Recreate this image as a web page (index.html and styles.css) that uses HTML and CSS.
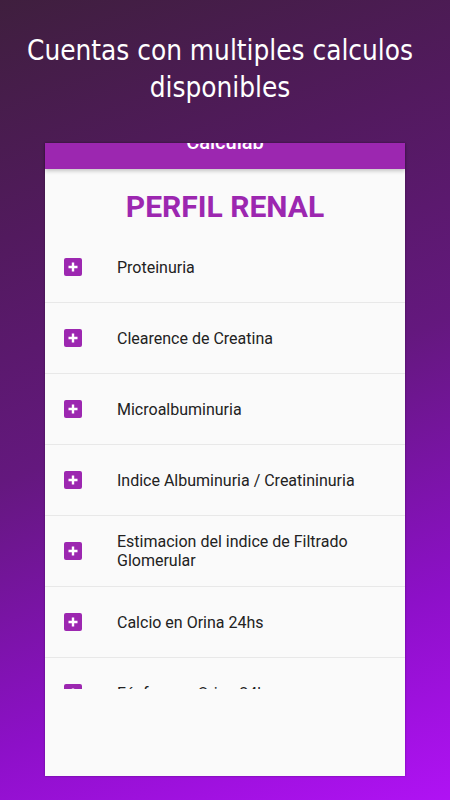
FILE: index.html
```html
<!DOCTYPE html>
<html lang="es">
<head>
<meta charset="utf-8">
<title>Calculab</title>
<link rel="stylesheet" href="styles.css">
</head>
<body>
<div class="screen">
  <h1 class="headline">Cuentas con multiples calculos disponibles</h1>
  <div class="card">
    <div class="appbar"><span class="appbar-title">Calculab</span></div>
    <div class="content">
      <h2 class="section-title">PERFIL RENAL</h2>
      <ul class="list">
        <li class="row"><span class="icon"><svg viewBox="0 0 18 18" width="18" height="18"><rect width="18" height="18" rx="2" fill="#9c27b0"/><path d="M9 4.5v9M4.5 9h9" stroke="#fff" stroke-width="2.4"/></svg></span><span class="label">Proteinuria</span></li>
        <li class="row"><span class="icon"><svg viewBox="0 0 18 18" width="18" height="18"><rect width="18" height="18" rx="2" fill="#9c27b0"/><path d="M9 4.5v9M4.5 9h9" stroke="#fff" stroke-width="2.4"/></svg></span><span class="label">Clearence de Creatina</span></li>
        <li class="row"><span class="icon"><svg viewBox="0 0 18 18" width="18" height="18"><rect width="18" height="18" rx="2" fill="#9c27b0"/><path d="M9 4.5v9M4.5 9h9" stroke="#fff" stroke-width="2.4"/></svg></span><span class="label">Microalbuminuria</span></li>
        <li class="row"><span class="icon"><svg viewBox="0 0 18 18" width="18" height="18"><rect width="18" height="18" rx="2" fill="#9c27b0"/><path d="M9 4.5v9M4.5 9h9" stroke="#fff" stroke-width="2.4"/></svg></span><span class="label">Indice Albuminuria / Creatininuria</span></li>
        <li class="row"><span class="icon"><svg viewBox="0 0 18 18" width="18" height="18"><rect width="18" height="18" rx="2" fill="#9c27b0"/><path d="M9 4.5v9M4.5 9h9" stroke="#fff" stroke-width="2.4"/></svg></span><span class="label">Estimacion del indice de Filtrado Glomerular</span></li>
        <li class="row"><span class="icon"><svg viewBox="0 0 18 18" width="18" height="18"><rect width="18" height="18" rx="2" fill="#9c27b0"/><path d="M9 4.5v9M4.5 9h9" stroke="#fff" stroke-width="2.4"/></svg></span><span class="label">Calcio en Orina 24hs</span></li>
        <li class="row"><span class="icon"><svg viewBox="0 0 18 18" width="18" height="18"><rect width="18" height="18" rx="2" fill="#9c27b0"/><path d="M9 4.5v9M4.5 9h9" stroke="#fff" stroke-width="2.4"/></svg></span><span class="label">Fósforo en Orina 24hs</span></li>
      </ul>
    </div>
  </div>
</div>
</body>
</html>
```
FILE: styles.css
```css
html, body {
  margin: 0;
  padding: 0;
}
body {
  width: 450px;
  height: 800px;
  overflow: hidden;
}
.screen {
  width: 450px;
  height: 800px;
  background: linear-gradient(160deg, #3f1f3e 0%, #521a5e 25%, #64187e 50%, #8d10c8 78%, #b012f4 100%);
  display: flex;
  flex-direction: column;
  align-items: center;
  box-sizing: border-box;
  padding-top: 32px;
}
.headline {
  margin: 0 10px 0 0;
  width: 420px;
  font-family: "DejaVu Sans Condensed", "DejaVu Sans", sans-serif;
  font-weight: normal;
  font-size: 27.7px;
  line-height: 37px;
  color: #fff;
  text-align: center;
}
.card {
  margin-top: 37px;
  width: 360px;
  height: 633px;
  background: #fafafa;
  display: flex;
  flex-direction: column;
  box-shadow: 0 0 2px rgba(0,0,0,0.35);
}
.appbar {
  height: 26px;
  background: #9c27b0;
  overflow: hidden;
  text-align: center;
  position: relative;
  z-index: 1;
  box-shadow: 0 2px 4px rgba(0,0,0,0.22);
}
.appbar-title {
  display: block;
  margin-top: -13px;
  font-family: Roboto, sans-serif;
  font-weight: 500;
  font-size: 20px;
  line-height: 24px;
  color: #fff;
}
.content {
  height: 520px;
  overflow: hidden;
}
.section-title {
  margin: 21px 0 8px;
  font-family: Roboto, sans-serif;
  font-weight: bold;
  font-size: 30px;
  line-height: 34px;
  color: #9c27b0;
  text-align: center;
}
.list {
  list-style: none;
  margin: 0;
  padding: 0;
}
.row {
  height: 70px;
  border-bottom: 1px solid #e8e8e8;
  display: flex;
  align-items: center;
  padding: 0 16px 0 19px;
}
.icon {
  width: 18px;
  height: 18px;
  flex: none;
  display: flex;
}
.label {
  margin-left: 35px;
  font-family: Roboto, sans-serif;
  font-size: 16px;
  line-height: 19px;
  color: #222;
}
```
